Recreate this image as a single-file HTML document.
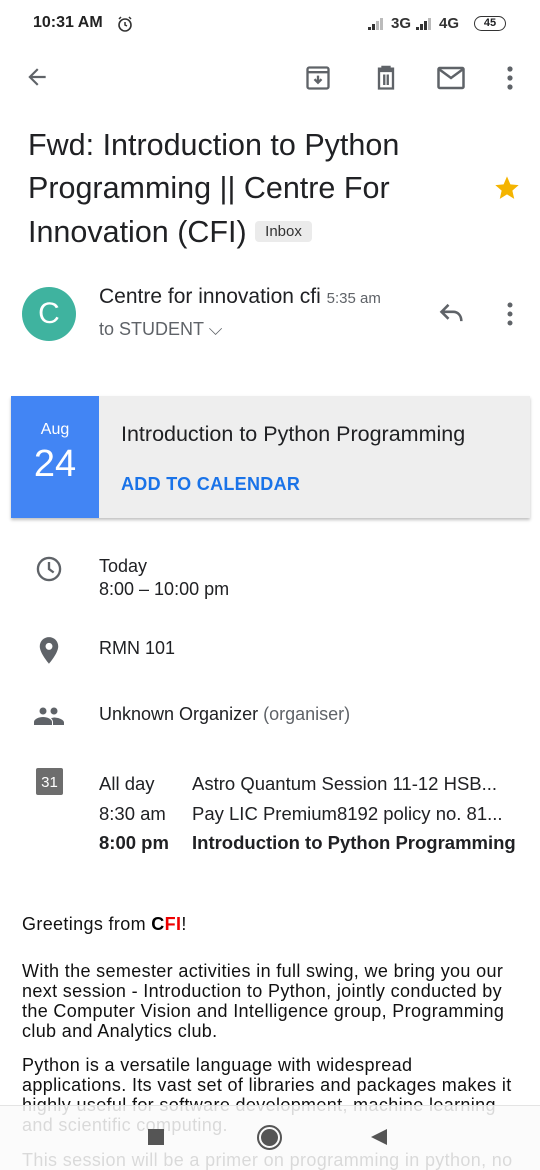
<!DOCTYPE html>
<html><head><style>
*{margin:0;padding:0;box-sizing:border-box}
body{width:540px;height:1170px;overflow:hidden;background:#fff;font-family:"Liberation Sans",Arial,sans-serif;color:#202124;position:relative}
.a{position:absolute}
.ic{position:absolute}
</style></head><body>
<div class="a" style="left:33px;top:14px;font-size:16px;font-weight:bold;color:#222">10:31 AM</div>
<svg class="ic" style="left:116px;top:15px" width="18" height="18" viewBox="0 0 18 18"><circle cx="9" cy="10" r="6" fill="none" stroke="#333" stroke-width="1.6"/><path d="M9 7v3l2 1M3 4l2-2M15 4l-2-2" stroke="#333" stroke-width="1.5" fill="none"/></svg>
<svg class="ic" style="left:368px;top:17px" width="20" height="13" viewBox="0 0 20 13"><rect x="0" y="10" width="3" height="3" fill="#333"/><rect x="4" y="7" width="3" height="6" fill="#333"/><rect x="8" y="4" width="3" height="9" fill="#bbb"/><rect x="12" y="1" width="3" height="12" fill="#bbb"/></svg>
<div class="a" style="left:391px;top:15px;font-size:15px;font-weight:bold;color:#333">3G</div>
<svg class="ic" style="left:416px;top:17px" width="20" height="13" viewBox="0 0 20 13"><rect x="0" y="10" width="3" height="3" fill="#333"/><rect x="4" y="7" width="3" height="6" fill="#333"/><rect x="8" y="4" width="3" height="9" fill="#333"/><rect x="12" y="1" width="3" height="12" fill="#bbb"/></svg>
<div class="a" style="left:439px;top:15px;font-size:15px;font-weight:bold;color:#333">4G</div>
<div class="a" style="left:474px;top:16px;width:32px;height:15px;border:1.5px solid #333;border-radius:8px;font-size:11px;font-weight:bold;text-align:center;line-height:12px">45</div>

<svg class="ic" style="left:24px;top:64px" width="26" height="26" viewBox="0 0 24 24"><path d="M20 11H7.8l5.6-5.6L12 4l-8 8 8 8 1.4-1.4L7.8 13H20z" fill="#5f6368"/></svg>
<svg class="ic" style="left:304px;top:64px" width="28" height="28" viewBox="0 0 24 24"><rect x="3" y="3" width="18" height="18" rx="1.5" fill="none" stroke="#5f6368" stroke-width="2"/><path d="M3 7h18" stroke="#5f6368" stroke-width="2"/><path d="M12 10v5M9 13l3 3 3-3" stroke="#5f6368" stroke-width="2" fill="none"/></svg>
<svg class="ic" style="left:372px;top:64px" width="28" height="28" viewBox="0 0 24 24"><path d="M5 4h14M9 4V2.5h6V4M6 6h12v15H6z" fill="none" stroke="#5f6368" stroke-width="2"/><path d="M10.5 9v9M13.5 9v9" stroke="#5f6368" stroke-width="2"/></svg>
<svg class="ic" style="left:436px;top:64px" width="30" height="28" viewBox="0 0 24 22"><rect x="2" y="3" width="20" height="16" rx="1" fill="none" stroke="#5f6368" stroke-width="2"/><path d="M2.5 4l9.5 7 9.5-7" fill="none" stroke="#5f6368" stroke-width="2"/></svg>
<svg class="ic" style="left:500px;top:64px" width="20" height="28" viewBox="0 0 20 28"><circle cx="10" cy="5" r="2.6" fill="#5f6368"/><circle cx="10" cy="14" r="2.6" fill="#5f6368"/><circle cx="10" cy="23" r="2.6" fill="#5f6368"/></svg>

<div class="a" style="left:28px;top:124px;font-size:30.5px;line-height:43px;color:#202124;width:440px">Fwd: Introduction to Python Programming || Centre For Innovation (CFI) <span style="font-size:15px;background:#ebebeb;border-radius:4px;padding:2px 10px;vertical-align:6px;color:#333">Inbox</span></div>
<svg class="ic" style="left:493px;top:174px" width="28" height="28" viewBox="0 0 24 24"><path d="M12 2l2.9 6.9 7.1.6-5.4 4.7 1.6 7.1L12 17.5 5.8 21.3l1.6-7.1L2 9.5l7.1-.6z" fill="#f4b400"/></svg>

<div class="a" style="left:22px;top:287px;width:54px;height:54px;border-radius:50%;background:#3fb39f;color:#fff;font-size:30px;text-align:center;line-height:54px">C</div>
<div class="a" style="left:99px;top:285px;font-size:21px;color:#202124">Centre for innovation cfi <span style="font-size:15px;color:#5f6368">5:35 am</span></div>
<div class="a" style="left:99px;top:319px;font-size:18px;color:#5f6368">to STUDENT ⌵</div>
<svg class="ic" style="left:438px;top:300px" width="28" height="26" viewBox="0 0 24 22"><path d="M9 4L3 10l6 6M3 10h10c4 0 7 3 7 8" fill="none" stroke="#5f6368" stroke-width="2.2"/></svg>
<svg class="ic" style="left:500px;top:300px" width="20" height="28" viewBox="0 0 20 28"><circle cx="10" cy="5" r="2.5" fill="#5f6368"/><circle cx="10" cy="14" r="2.5" fill="#5f6368"/><circle cx="10" cy="23" r="2.5" fill="#5f6368"/></svg>

<div class="a" style="left:11px;top:396px;width:519px;height:122px;background:#eeeeee;box-shadow:0 2px 3px rgba(0,0,0,.25)"></div>
<div class="a" style="left:11px;top:396px;width:88px;height:122px;background:#4285f4;color:#fff;text-align:center">
<div style="font-size:16px;margin-top:25px">Aug</div><div style="font-size:38px;margin-top:4px">24</div></div>
<div class="a" style="left:121px;top:422px;font-size:21.5px;color:#202124">Introduction to Python Programming</div>
<div class="a" style="left:121px;top:474px;font-size:18px;color:#1a73e8;font-weight:bold;letter-spacing:.3px">ADD TO CALENDAR</div>

<svg class="ic" style="left:35px;top:555px" width="28" height="28" viewBox="0 0 24 24"><circle cx="12" cy="12" r="9.5" fill="none" stroke="#5f6368" stroke-width="2"/><path d="M12 6v6l4 3" fill="none" stroke="#5f6368" stroke-width="2"/></svg>
<div class="a" style="left:99px;top:555px;font-size:18px;line-height:23px">Today<br>8:00 – 10:00 pm</div>
<svg class="ic" style="left:35px;top:636px" width="28" height="30" viewBox="0 0 24 26"><path d="M12 1C7.6 1 4 4.5 4 9c0 6 8 15 8 15s8-9 8-15c0-4.5-3.6-8-8-8zm0 11a3 3 0 110-6 3 3 0 010 6z" fill="#5f6368"/></svg>
<div class="a" style="left:99px;top:638px;font-size:18px">RMN 101</div>
<svg class="ic" style="left:33px;top:703px" width="32" height="24" viewBox="0 0 32 24"><circle cx="10" cy="8" r="3.5" fill="#5f6368"/><circle cx="21" cy="8" r="3.5" fill="#5f6368"/><path d="M1 22v-3c0-3 5-5 9-5s9 2 9 5v3zM20 22v-3c0-1.5-1-3-2-4 1 0 3-.5 3-.5 4 0 10 2 10 5v2.5z" fill="#5f6368"/></svg>
<div class="a" style="left:99px;top:704px;font-size:18px">Unknown Organizer <span style="color:#5f6368">(organiser)</span></div>
<div class="a" style="left:36px;top:768px;width:27px;height:27px;background:#6d6d6d;border-radius:2px;color:#fff;font-size:15px;text-align:center;line-height:30px">31</div>
<div class="a" style="left:99px;top:769px;font-size:18.5px;line-height:29.5px">All day<br>8:30 am<br><b>8:00 pm</b></div>
<div class="a" style="left:192px;top:769px;font-size:18.5px;line-height:29.5px;white-space:nowrap">Astro Quantum Session 11-12 HSB...<br>Pay LIC Premium8192 policy no. 81...<br><b>Introduction to Python Programming</b></div>

<div class="a" style="left:22px;top:914px;font-size:18px;letter-spacing:0.35px;width:520px;line-height:20px;color:#111;white-space:nowrap">Greetings from <b style="color:#000">C<span style="color:#e00">FI</span></b>!
<div style="margin-top:27px">With the semester activities in full swing, we bring you our<br>next session - Introduction to Python, jointly conducted by<br>the Computer Vision and Intelligence group, Programming<br>club and Analytics club.</div>
<div style="margin-top:14px">Python is a versatile language with widespread<br>applications. Its vast set of libraries and packages makes it<br>highly useful for software development, machine learning<br>and scientific computing.</div>
<div style="margin-top:15px">This session will be a primer on programming in python, no</div></div>

<div class="a" style="left:0;top:1105px;width:540px;height:65px;background:rgba(250,250,250,.86);border-top:1px solid #e4e4e4"></div>
<div class="a" style="left:148px;top:1129px;width:16px;height:16px;background:#555"></div>
<div class="a" style="left:257px;top:1125px;width:25px;height:25px;border-radius:50%;border:2.5px solid #555;padding:2px"><div style="width:100%;height:100%;border-radius:50%;background:#555"></div></div>
<svg class="ic" style="left:370px;top:1128px" width="18" height="18" viewBox="0 0 18 18"><path d="M17 1v16L1 9z" fill="#555"/></svg>
</body></html>
